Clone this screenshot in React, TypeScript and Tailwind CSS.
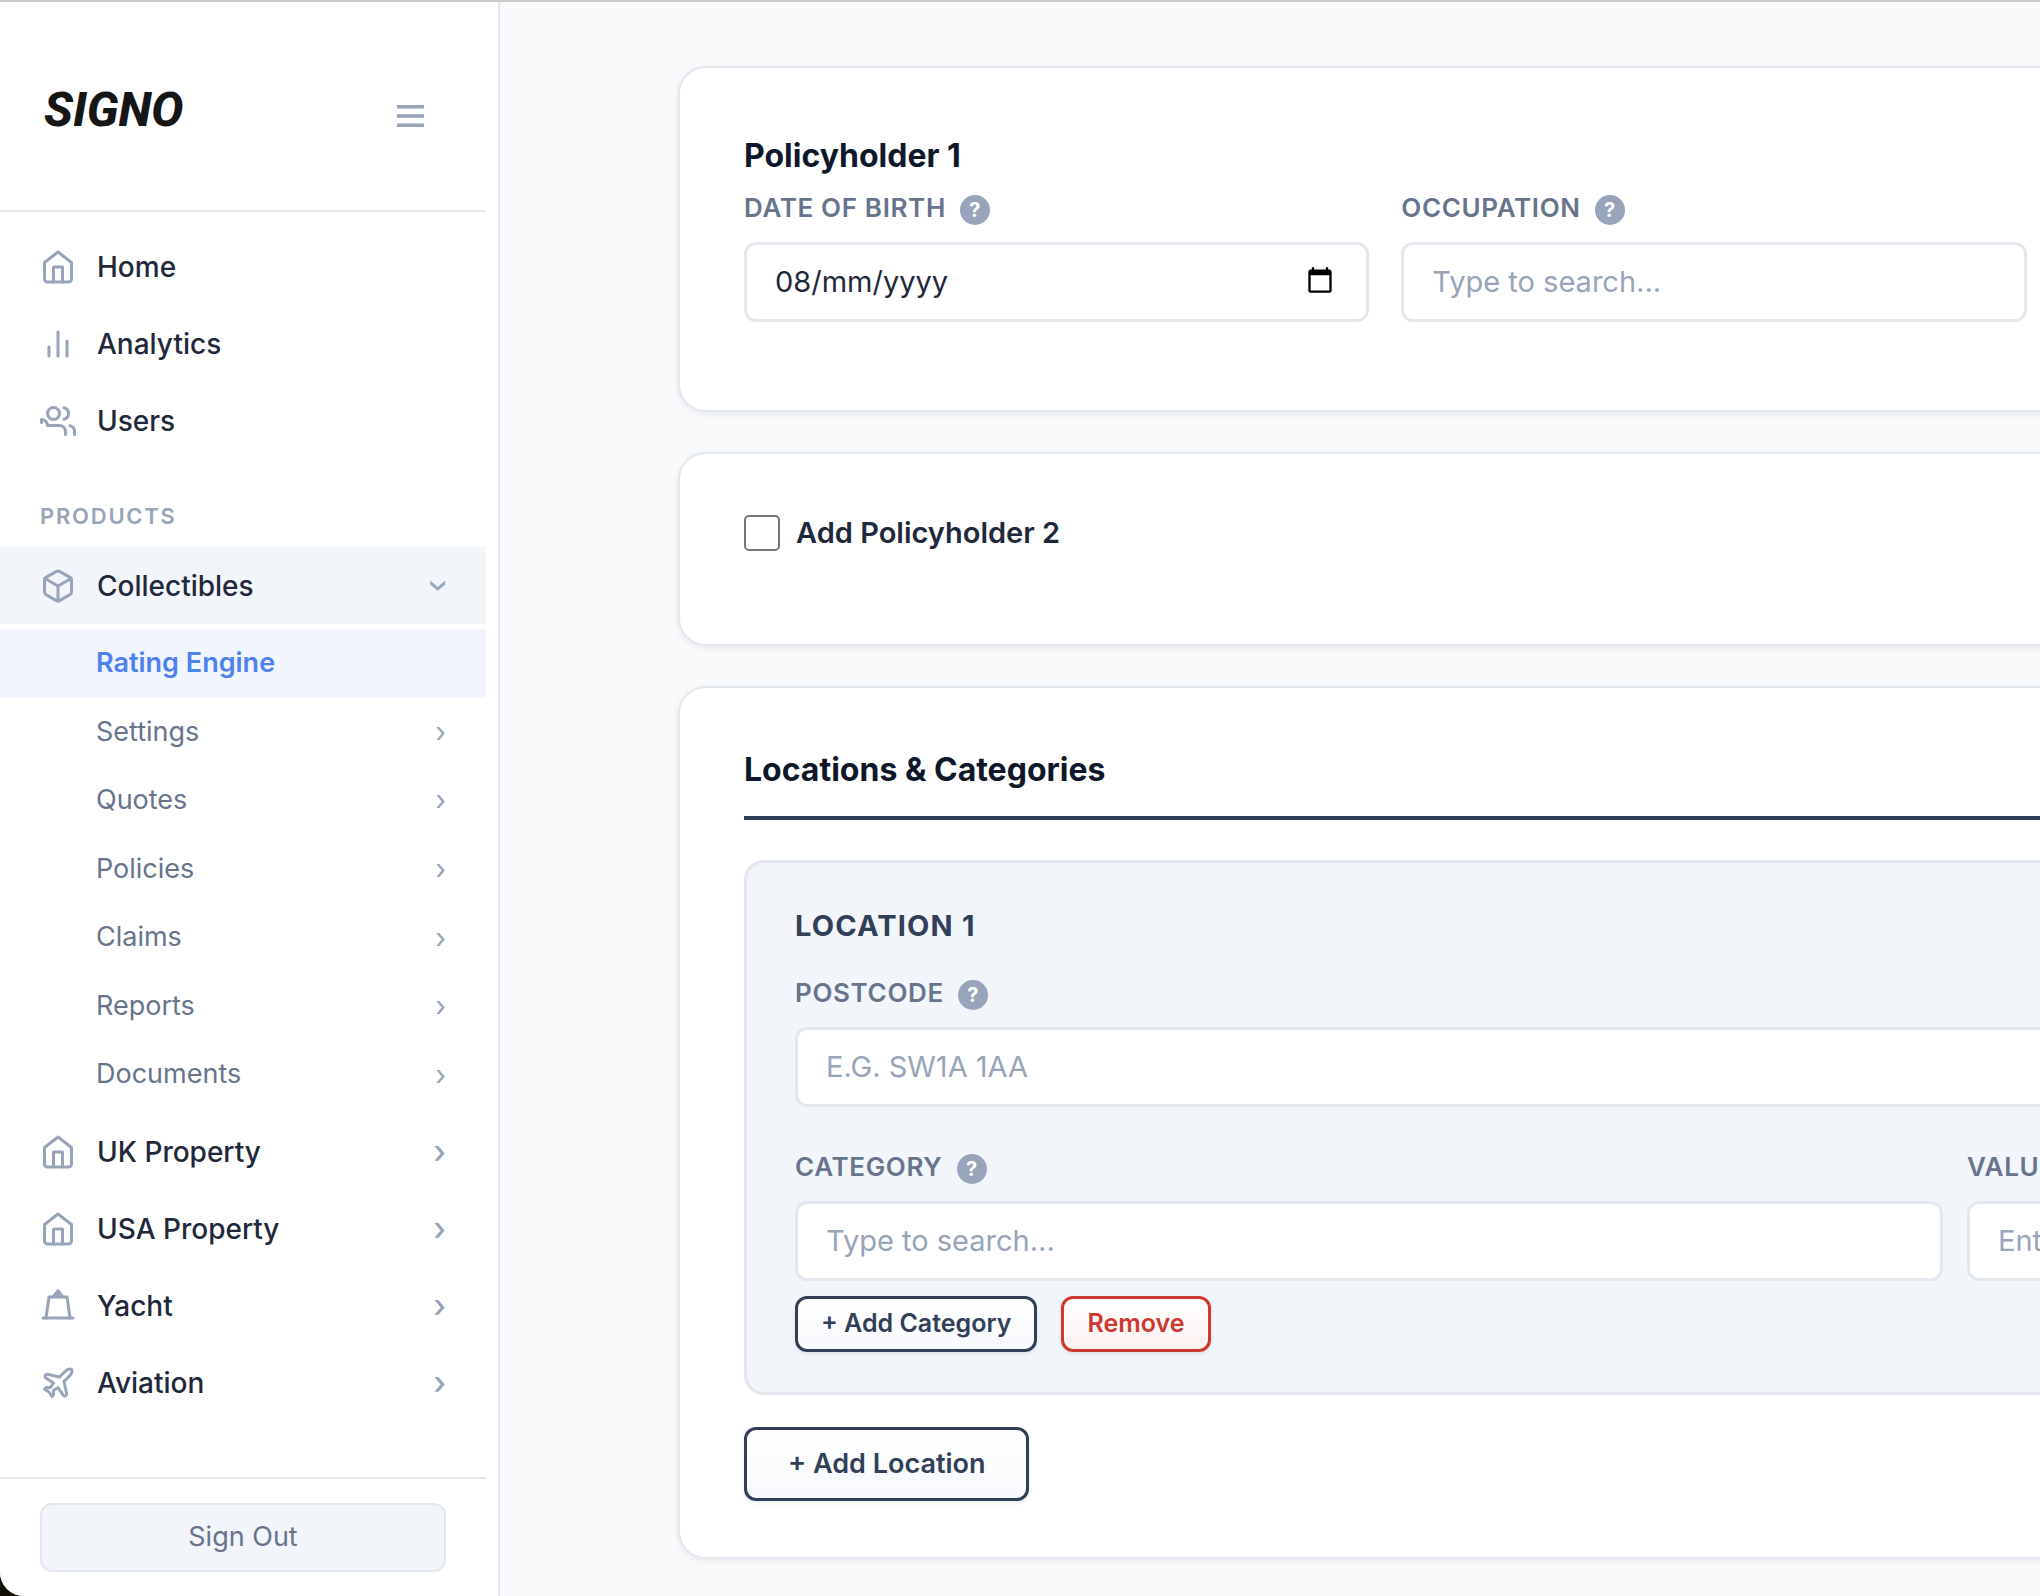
import React from 'react';
import clsx from 'clsx';

const icons = {
  home: (
    <>
      <path d="M3 9l9-7 9 7v11a2 2 0 0 1-2 2H5a2 2 0 0 1-2-2z" />
      <polyline points="9 22 9 12 15 12 15 22" />
    </>
  ),
  analytics: (
    <>
      <line x1="18" y1="20" x2="18" y2="10" />
      <line x1="12" y1="20" x2="12" y2="4" />
      <line x1="6" y1="20" x2="6" y2="14" />
    </>
  ),
  users: (
    <>
      <path d="M17 21v-2a4 4 0 0 0-4-4H5a4 4 0 0 0-4-4v2" />
      <circle cx="9" cy="7" r="4" />
      <path d="M23 21v-2a4 4 0 0 0-3-3.87" />
      <path d="M16 3.13a4 4 0 0 1 0 7.75" />
    </>
  ),
  box: (
    <>
      <path d="M21 16V8a2 2 0 0 0-1-1.73l-7-4a2 2 0 0 0-2 0l-7 4A2 2 0 0 0 3 8v8a2 2 0 0 0 1 1.73l7 4a2 2 0 0 0 2 0l7-4A2 2 0 0 0 21 16z" />
      <polyline points="3.27 6.96 12 12.01 20.73 6.96" />
      <line x1="12" y1="22.08" x2="12" y2="12" />
    </>
  ),
  yacht: (
    <>
      <path d="M2 20h20" />
      <path d="M4 20L6 6h12l2 14" />
      <path d="M12 2v4" />
      <path d="M9 5.5l3-3.5 3 3.5" />
    </>
  ),
  plane: (
    <path d="M17.8 19.2 16 11l3.5-3.5C21 6 21.5 4 21 3c-1-.5-3 0-4.5 1.5L13 8 4.8 6.2c-.5-.1-.9.1-1.1.5l-.3.5c-.2.5-.1 1 .3 1.3L9 12l-2 3H4l-1 1 3 2 2 3 1-1v-3l3-2 3.5 5.3c.3.4.8.5 1.3.3l.5-.2c.4-.3.6-.7.5-1.2z" />
  ),
};

type IconName = keyof typeof icons;

const mainLinks: { label: string; icon: IconName }[] = [
  { label: 'Home', icon: 'home' },
  { label: 'Analytics', icon: 'analytics' },
  { label: 'Users', icon: 'users' },
];

const subLinks = ['Rating Engine', 'Settings', 'Quotes', 'Policies', 'Claims', 'Reports', 'Documents'];

const productLinks: { label: string; icon: IconName }[] = [
  { label: 'UK Property', icon: 'home' },
  { label: 'USA Property', icon: 'home' },
  { label: 'Yacht', icon: 'yacht' },
  { label: 'Aviation', icon: 'plane' },
];

function NavItem({ label, icon, chevron, open }: { label: string; icon: IconName; chevron?: boolean; open?: boolean }) {
  return (
    <a
      href="#"
      className={clsx(
        'flex h-[77px] items-center gap-[21px] pl-10 pr-10 text-[28px] font-medium text-[#1f293b]',
        open && 'bg-[#f2f5fa]',
      )}
    >
      <svg
        viewBox="0 0 24 24"
        className="size-9 shrink-0 overflow-visible text-[#98a4b9]"
        fill="none"
        stroke="currentColor"
        strokeWidth="2"
        strokeLinecap="round"
        strokeLinejoin="round"
      >
        {icons[icon]}
      </svg>
      <span className="flex-1">{label}</span>
      {chevron && (
        <span className={clsx('text-[32px] leading-none text-[#98a4b9]', open && 'rotate-90')}>›</span>
      )}
    </a>
  );
}

function Sidebar() {
  return (
    <aside className="flex w-[500px] shrink-0 flex-col border-r-2 border-[#e3e8ef] bg-white pr-3">
      <div className="flex h-[210px] items-center justify-between border-b-2 border-[#e3e8ee] pl-11 pr-[60px] pt-2">
        <span className="font-[Roboto] text-[48px] font-extrabold italic leading-none text-[#161616]">SIGNO</span>
        <button aria-label="Toggle menu" className="mt-3 text-[#98a4b9]">
          <svg width="32" height="24" viewBox="0 0 32 24" fill="currentColor">
            <rect x="3" y="1" width="27" height="3.6" />
            <rect x="3" y="10.2" width="27" height="3.6" />
            <rect x="3" y="19.4" width="27" height="3.6" />
          </svg>
        </button>
      </div>

      <nav className="flex-1 pt-4">
        {mainLinks.map((l) => (
          <NavItem key={l.label} {...l} />
        ))}
        <h2 className="flex h-22 items-end pb-[14px] pl-10 text-[22px] font-semibold tracking-[0.08em] text-[#98a4b9]">
          PRODUCTS
        </h2>
        <NavItem label="Collectibles" icon="box" chevron open />
        {/* Collectibles submenu */}
        <ul className="mb-1 mt-[5px] grid h-[480px] auto-rows-fr">
          {subLinks.map((label, i) => (
            <li key={label} className="grid">
              <a
                href="#"
                className={clsx(
                  'flex items-center justify-between pl-24 pr-10 text-[27px]',
                  i === 0 ? 'bg-[#f0f5fe] font-semibold text-[#4f82ee]' : 'text-[#67748b]',
                )}
              >
                {label}
                {i > 0 && <span className="text-[28px] leading-none text-[#98a4b9]">›</span>}
              </a>
            </li>
          ))}
        </ul>
        {productLinks.map((l) => (
          <NavItem key={l.label} {...l} chevron />
        ))}
      </nav>

      <div className="border-t-2 border-[#e3e8ee] py-6 pl-10 pr-10">
        <button className="h-[69px] w-full rounded-xl border-2 border-[#e3e8ee] bg-[#f2f5fa] text-[27px] text-[#67748b]">
          Sign Out
        </button>
      </div>
    </aside>
  );
}

function Card({ className, children }: { className?: string; children: React.ReactNode }) {
  return (
    <section
      className={clsx(
        'rounded-[28px] border-2 border-[#e3e8ee] bg-white px-16 shadow-[0_2px_6px_rgba(15,23,42,0.08)]',
        className,
      )}
    >
      {children}
    </section>
  );
}

function Field({
  id,
  label,
  placeholder,
  defaultValue,
  children,
}: {
  id: string;
  label: string;
  placeholder?: string;
  defaultValue?: string;
  children?: React.ReactNode;
}) {
  return (
    <div>
      <div className="mb-[13px] flex h-[42px] items-center gap-[14px]">
        <label htmlFor={id} className="text-[26px] font-semibold leading-[42px] tracking-wide text-[#67748b]">
          {label}
        </label>
        <span className="mt-1 flex size-[30px] shrink-0 items-center justify-center rounded-full bg-[#98a4b9] text-[20px] font-bold leading-none text-white">
          ?
        </span>
      </div>
      <div className="flex h-20 items-center rounded-xl border-3 border-[#e3e8ee] bg-white pl-7 pr-8">
        <input
          id={id}
          type="text"
          placeholder={placeholder}
          defaultValue={defaultValue}
          className="min-w-0 flex-1 text-[29px] text-[#1f293b] outline-none placeholder:text-[#98a4b9]"
        />
        {children}
      </div>
    </div>
  );
}

function OutlineButton({ className, children }: { className?: string; children: React.ReactNode }) {
  return (
    <button
      type="button"
      className={clsx(
        'rounded-xl border-3 bg-linear-to-b from-white font-semibold shadow-[0_2px_4px_rgba(15,23,42,0.08)]',
        className,
      )}
    >
      {children}
    </button>
  );
}

export default function App() {
  return (
    <div className="min-h-screen bg-[#120f05] font-[Inter,sans-serif]">
      <div className="flex min-h-screen overflow-hidden rounded-bl-[24px] border-t-2 border-[#cbcbcb] bg-[#f9fafc]">
        <Sidebar />

        <main className="min-w-0 flex-1 overflow-hidden pl-[178px] pt-16">
          <form className="flex min-w-[2072px] flex-col gap-10">
            <Card className="pb-22 pt-16">
              <h2 className="mb-[7px] text-[32px] font-bold leading-[48px] text-[#0f172a]">Policyholder 1</h2>
              <div className="grid grid-cols-3 gap-8">
                <Field id="dob" label="DATE OF BIRTH" defaultValue="08/mm/yyyy">
                  <button type="button" aria-label="Open calendar" className="pb-1">
                    <svg viewBox="0 0 24 24" className="size-7" fill="#000">
                      <path d="M20 3h-1V1h-2v2H7V1H5v2H4c-1.1 0-2 .9-2 2v16c0 1.1.9 2 2 2h16c1.1 0 2-.9 2-2V5c0-1.1-.9-2-2-2zm0 18H4V8h16v13z" />
                    </svg>
                  </button>
                </Field>
                <Field id="occupation" label="OCCUPATION" placeholder="Type to search..." />
              </div>
            </Card>

            <Card className="pb-24 pt-16">
              <label className="flex h-[30px] items-center gap-4 text-[29px] font-semibold text-[#1f293b]">
                <input
                  type="checkbox"
                  className="size-9 shrink-0 appearance-none rounded-[5px] border-2 border-[#767676] bg-white"
                />
                Add Policyholder 2
              </label>
            </Card>

            <Card className="pb-14 pt-16">
              <h2 className="mb-10 border-b-4 border-[#314058] pb-7 text-[32px] font-bold leading-9 text-[#0f172a]">
                Locations &amp; Categories
              </h2>

              <div className="rounded-[20px] border-3 border-[#e3e8ee] bg-[#f2f5fa] px-12 py-10">
                <h3 className="mb-[23px] text-[29px] font-bold leading-[46px] tracking-[0.04em] text-[#314058]">
                  LOCATION 1
                </h3>
                <Field id="postcode" label="POSTCODE" placeholder="E.G. SW1A 1AA" />
                <div className="mt-[39px] grid grid-cols-[1148px_1fr] gap-6">
                  <Field id="category" label="CATEGORY" placeholder="Type to search..." />
                  <Field id="value" label="VALUE" placeholder="Enter value" />
                </div>
                <div className="mt-[15px] flex gap-6">
                  <OutlineButton className="h-14 border-[#314058] to-[#f7f9fc] px-[23px] text-[25px] text-[#314058]">
                    + Add Category
                  </OutlineButton>
                  <OutlineButton className="h-14 border-[#cd3830] to-[#fcf1f1] px-[23px] text-[25px] text-[#cd3830]">
                    Remove
                  </OutlineButton>
                </div>
              </div>

              <OutlineButton className="mt-8 h-[74px] border-[#314058] to-[#f7f9fc] px-[41px] text-[27px] text-[#314058]">
                + Add Location
              </OutlineButton>
            </Card>
          </form>
        </main>
      </div>
    </div>
  );
}
